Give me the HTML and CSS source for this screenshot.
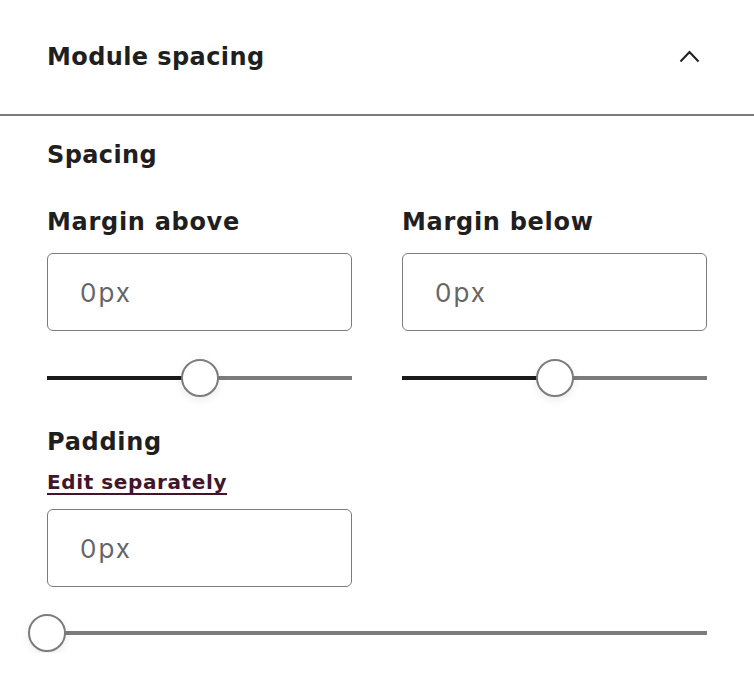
FILE: index.html
```html
<!DOCTYPE html>
<html lang="en">
<head>
<meta charset="utf-8">
<link rel="stylesheet" href="styles.css">
</head>
<body>
<div class="panel">
  <div class="panel-header">
    <span class="panel-title">Module spacing</span>
    <svg class="chevron" width="21" height="13" viewBox="0 0 21 13" aria-hidden="true"><path d="M1.5 11.5 L10.5 2 L19.5 11.5" fill="none" stroke="#1f1f1f" stroke-width="2"/></svg>
  </div>
  <div class="panel-body">
    <div class="section-title">Spacing</div>
    <div class="field-grid">
      <div class="field">
        <div class="field-label">Margin above</div>
        <div class="text-input">0px</div>
        <div class="slider">
          <div class="track"></div>
          <div class="fill" style="width:50%"></div>
          <div class="thumb" style="left:50%"></div>
        </div>
      </div>
      <div class="field">
        <div class="field-label">Margin below</div>
        <div class="text-input">0px</div>
        <div class="slider">
          <div class="track"></div>
          <div class="fill" style="width:50%"></div>
          <div class="thumb" style="left:50%"></div>
        </div>
      </div>
    </div>
    <div class="field padding-field">
      <div class="field-label">Padding</div>
      <a class="edit-link" href="#">Edit separately</a>
      <div class="text-input narrow">0px</div>
      <div class="slider full">
        <div class="track"></div>
        <div class="fill" style="width:0%"></div>
        <div class="thumb" style="left:0%"></div>
      </div>
    </div>
  </div>
</div>
</body>
</html>
```
FILE: styles.css
```css
* { box-sizing: border-box; }
body {
  margin: 0;
  background: #fff;
  font-family: "DejaVu Sans", "Inter", sans-serif;
  color: #1f1f1f;
}
.panel { width: 754px; }
.panel-header {
  height: 116px;
  border-bottom: 2px solid #7c7c7c;
  display: flex;
  align-items: center;
  justify-content: space-between;
  padding: 0 54px 0 47px;
}
.panel-title {
  font-size: 24px;
  font-weight: 700;
  letter-spacing: 0.4px;
  line-height: 32px;
}
.chevron { display: block; margin-top: -2px; }
.panel-body {
  padding: 23px 47px 0 47px;
}
.section-title {
  font-size: 24px;
  font-weight: 700;
  line-height: 32px;
  letter-spacing: 0.4px;
}
.field-grid {
  display: grid;
  grid-template-columns: 305px 305px;
  column-gap: 50px;
  margin-top: 35px;
}
.field { display: flex; flex-direction: column; }
.field-label {
  font-size: 24px;
  font-weight: 700;
  line-height: 32px;
  letter-spacing: 0.7px;
}
.text-input {
  margin-top: 15px;
  height: 78px;
  border: 1.5px solid #7c7c7c;
  border-radius: 6px;
  display: flex;
  align-items: center;
  padding-left: 32px;
  font-family: "Inter", sans-serif;
  font-size: 26px;
  letter-spacing: 2px;
  color: #666;
  font-weight: 400;
}
.text-input.narrow { width: 305px; }
.slider {
  position: relative;
  height: 40px;
  margin-top: 27px;
}
.slider.full { width: 660px; margin-top: 26px; }
.track {
  position: absolute;
  left: 0; right: 0;
  top: 18px;
  height: 4px;
  background: #7c7c7c;
}
.fill {
  position: absolute;
  left: 0;
  top: 18px;
  height: 4px;
  background: #1a1a1a;
}
.thumb {
  position: absolute;
  top: 1px;
  width: 38px;
  height: 38px;
  margin-left: -19px;
  border-radius: 50%;
  background: #fff;
  border: 2px solid #7c7c7c;
  box-shadow: 0 3px 8px rgba(0,0,0,0.08);
}
.padding-field { margin-top: 28px; }
.edit-link {
  margin-top: 12px;
  font-size: 20px;
  font-weight: 700;
  line-height: 24px;
  letter-spacing: 0.6px;
  color: #42152b;
  text-decoration: underline;
  text-decoration-thickness: 2px;
  text-underline-offset: 4px;
  align-self: flex-start;
}
```
